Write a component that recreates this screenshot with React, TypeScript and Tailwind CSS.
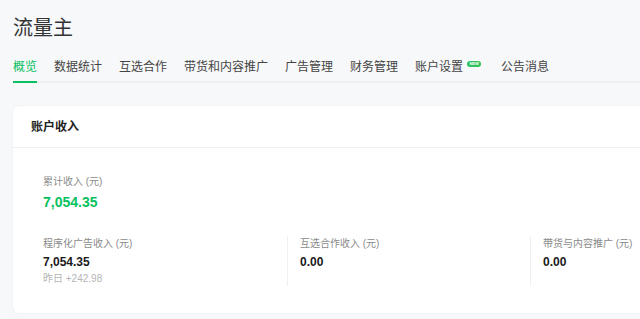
import React from "react";

const font = { fontFamily: '"Liberation Sans", "Noto Sans CJK SC", sans-serif' };

const tabs = ["概览", "数据统计", "互选合作", "带货和内容推广", "广告管理", "财务管理", "账户设置", "公告消息"];

function Col({ label, value, sub, first }: { label: string; value: string; sub?: string; first?: boolean }) {
  return (
    <div className={`shrink-0 h-[50px] ${first ? "w-[244px]" : "w-[243px] pl-[12px] border-l border-[#f0f0f0]"}`}>
      <div className="text-[10px] leading-[16px] text-[#8a8a8a]">{label}</div>
      <div className="mt-[1px] text-[12px] leading-[18px] font-bold text-[#1a1a1a]">{value}</div>
      {sub && <div className="text-[10px] leading-[16px] text-[#b5b5b5]">{sub}</div>}
    </div>
  );
}

export default function App() {
  return (
    <div className="w-[640px] h-[319px] overflow-hidden bg-[#f7f8fa]" style={font}>
      <div className="pl-[13px] pt-[14px]">
        <div className="text-[20px] leading-[28px] text-[#333]">流量主</div>
        <div className="mt-[15px] flex gap-[17px] border-b-2 border-[#eceef1] w-[700px]">
          {tabs.map((t, i) => (
            <div
              key={t}
              className={`relative flex items-start text-[12px] leading-[20px] pb-[4px] -mb-[2px] border-b-2 ${
                i === 0 ? "border-[#07c160] text-[#07c160]" : "border-transparent text-[#444]"
              }`}
            >
              <span>{t}</span>
              {t === "账户设置" && (
                <span className="ml-[4px] mr-[3px] mt-[4px] w-[14px] h-[6px] rounded-full bg-[#2fc25b] text-white text-[4px] leading-[6px] text-center font-bold">
                  NEW
                </span>
              )}
            </div>
          ))}
        </div>
        <div className="mt-[23px] w-[800px] h-[207px] bg-white rounded-[6px] shadow-[0_0_2px_rgba(0,0,0,0.08)]">
          <div className="h-[42px] flex items-center pl-[18px] border-b border-[#f0f0f0] text-[12px] font-bold text-[#222]">
            账户收入
          </div>
          <div className="pl-[30px] pt-[26px]">
            <div>
              <div className="text-[10px] leading-[16px] text-[#8a8a8a]">累计收入 (元)</div>
              <div className="mt-[2px] text-[14px] leading-[20px] font-semibold text-[#07c160]">7,054.35</div>
            </div>
            <div className="mt-[24px] flex">
              <Col first label="程序化广告收入 (元)" value="7,054.35" sub="昨日 +242.98" />
              <Col label="互选合作收入 (元)" value="0.00" />
              <Col label="带货与内容推广 (元)" value="0.00" />
            </div>
          </div>
        </div>
      </div>
    </div>
  );
}
